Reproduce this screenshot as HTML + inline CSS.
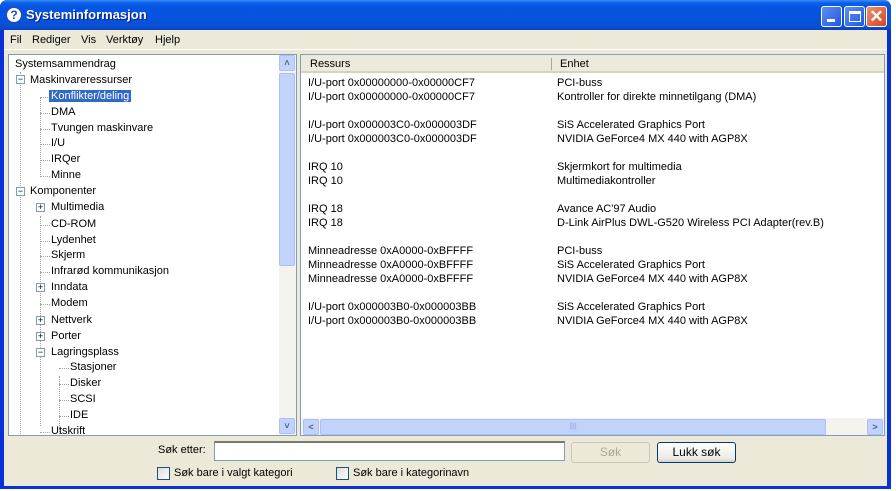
<!DOCTYPE html>
<html><head><meta charset="utf-8"><style>
*{margin:0;padding:0;box-sizing:border-box}
body{width:896px;height:491px;background:#fff;position:relative;overflow:hidden;font-family:"Liberation Sans",sans-serif;font-size:11px;color:#000}
.win{position:absolute;left:0;top:0;width:891px;height:489px;background:#0831d9;border-radius:7px 7px 0 0;}
.title{position:absolute;left:0;top:0;width:891px;height:30px;border-radius:7px 7px 0 0;background:linear-gradient(#3d8af7 0,#0a5fe8 3px,#0554e3 8px,#0653de 20px,#0a4fd0 27px,#0841c4 30px)}
.title .t{position:absolute;left:26px;top:7px;color:#fff;font-weight:bold;font-size:13px;text-shadow:1px 1px #0a2080}
.ico{position:absolute;left:6px;top:7px;width:16px;height:16px;border-radius:50%;background:#fff;border:1px solid #2a4c9c;color:#2050b0;font-weight:bold;font-size:12px;text-align:center;line-height:14px}
.btn{position:absolute;top:6px;width:21px;height:21px;border:1px solid #fff;border-radius:3px;background:linear-gradient(135deg,#5e8ff5,#2257e0)}
.client{position:absolute;left:4px;top:30px;width:883px;height:456px;background:#ece9d8}
.menu span{position:absolute;top:4px}
.panel{position:absolute;background:#fff;border:1px solid #7f9db9}
.tree div{position:absolute;white-space:nowrap}
.pm{position:absolute;width:9px;height:9px;border:1px solid #7f9db9;background:#fff;font-size:9px;line-height:7px;text-align:center;color:#000}
.vd{position:absolute;border-left:1px dotted #a0a0a0}
.hd{position:absolute;border-top:1px dotted #a0a0a0;width:10px}
.sbv{position:absolute;background:#f4f3ee}
.thumb{position:absolute;background:#c1d3fb;border:1px solid #a9c1f5;border-radius:2px}
.arr{position:absolute;width:16px;height:16px;background:#c1d3fb;border:1px solid #a9c1f5;border-radius:2px;color:#4d6185;font-size:9px;text-align:center;line-height:14px;font-weight:bold}
.row{position:absolute;white-space:nowrap}
.b{position:absolute;border-radius:3px;text-align:center;font-size:12px;line-height:19px}
.cb{position:absolute;width:13px;height:13px;border:1px solid #1c5180;background:linear-gradient(135deg,#dcdcd7,#fff)}
</style></head><body>
<div class="win">
<div class="title"><div class="ico">?</div><div class="t">Systeminformasjon</div>
<div class="btn" style="left:821px"><div style="position:absolute;left:5px;top:12px;width:8px;height:3px;background:#fff"></div></div>
<div class="btn" style="left:844px"><div style="position:absolute;left:4px;top:4px;width:12px;height:11px;border:1px solid #fff;border-top-width:3px"></div></div>
<div class="btn" style="left:866px;background:linear-gradient(135deg,#e99274,#d1461f);color:#fff;font-size:17px;line-height:19px;text-align:center;font-weight:bold">✕</div>
</div>
<div class="client">
<div class="menu"><span style="left:6px">Fil</span><span style="left:28px">Rediger</span><span style="left:77px">Vis</span><span style="left:102px">Verktøy</span><span style="left:151px">Hjelp</span></div>
<div style="position:absolute;left:0;top:19px;width:883px;height:1px;background:#fff"></div>
<div class="panel tree" style="left:4px;top:24px;width:289px;height:382px;overflow:hidden">
<div class="vd" style="left:11px;top:17px;height:370px"></div>
<div class="vd" style="left:31px;top:161px;height:210px"></div>
<div class="vd" style="left:50px;top:321px;height:62px"></div>
<div style="left:6px;top:3px">Systemsammendrag</div>
<div class="pm" style="left:7px;top:20px">−</div><div style="left:21px;top:19px">Maskinvareressurser</div>
<div class="hd" style="left:31px;top:42px"></div><div style="left:40px;top:35px;background:#316ac5;color:#fff;padding:0 2px">Konflikter/deling</div>
<div class="hd" style="left:31px;top:58px"></div><div style="left:42px;top:51px">DMA</div>
<div class="hd" style="left:31px;top:74px"></div><div style="left:42px;top:67px">Tvungen maskinvare</div>
<div class="hd" style="left:31px;top:89px"></div><div style="left:42px;top:82px">I/U</div>
<div class="hd" style="left:31px;top:105px"></div><div style="left:42px;top:98px">IRQer</div>
<div class="hd" style="left:31px;top:121px"></div><div style="left:42px;top:114px">Minne</div>
<div class="vd" style="left:31px;top:42px;height:80px"></div>
<div class="pm" style="left:7px;top:132px">−</div><div style="left:21px;top:130px">Komponenter</div>
<div class="pm" style="left:27px;top:148px">+</div><div style="left:42px;top:146px">Multimedia</div>
<div class="hd" style="left:31px;top:170px"></div><div style="left:42px;top:163px">CD-ROM</div>
<div class="hd" style="left:31px;top:186px"></div><div style="left:42px;top:179px">Lydenhet</div>
<div class="hd" style="left:31px;top:201px"></div><div style="left:42px;top:194px">Skjerm</div>
<div class="hd" style="left:31px;top:217px"></div><div style="left:42px;top:210px">Infrarød kommunikasjon</div>
<div class="pm" style="left:27px;top:228px">+</div><div style="left:42px;top:226px">Inndata</div>
<div class="hd" style="left:31px;top:249px"></div><div style="left:42px;top:242px">Modem</div>
<div class="pm" style="left:27px;top:261px">+</div><div style="left:42px;top:259px">Nettverk</div>
<div class="pm" style="left:27px;top:277px">+</div><div style="left:42px;top:275px">Porter</div>
<div class="pm" style="left:27px;top:293px">−</div><div style="left:42px;top:291px">Lagringsplass</div>
<div class="hd" style="left:50px;top:313px"></div><div style="left:61px;top:306px">Stasjoner</div>
<div class="hd" style="left:50px;top:329px"></div><div style="left:61px;top:322px">Disker</div>
<div class="hd" style="left:50px;top:345px"></div><div style="left:61px;top:338px">SCSI</div>
<div class="hd" style="left:50px;top:361px"></div><div style="left:61px;top:354px">IDE</div>
<div class="hd" style="left:31px;top:377px"></div><div style="left:42px;top:370px">Utskrift</div>
<div class="sbv" style="left:270px;top:0;width:17px;height:380px"></div>
<div class="arr" style="left:270px;top:0">˄</div>
<div class="thumb" style="left:270px;top:18px;width:16px;height:193px"></div>
<div class="arr" style="left:270px;top:363px">˅</div>
</div>
<div class="panel" style="left:296px;top:24px;width:585px;height:382px;overflow:hidden">
<div style="position:absolute;left:0;top:0;width:585px;height:18px;background:#ebeadb;border-bottom:2px solid #d6d2c2"></div>
<div class="row" style="left:9px;top:3px">Ressurs</div>
<div style="position:absolute;left:250px;top:3px;width:1px;height:12px;background:#aca899"></div>
<div class="row" style="left:259px;top:3px">Enhet</div>
<div style="position:absolute;left:7px;top:21px;line-height:14px;white-space:pre">I/U-port 0x00000000-0x00000CF7
I/U-port 0x00000000-0x00000CF7

I/U-port 0x000003C0-0x000003DF
I/U-port 0x000003C0-0x000003DF

IRQ 10
IRQ 10

IRQ 18
IRQ 18

Minneadresse 0xA0000-0xBFFFF
Minneadresse 0xA0000-0xBFFFF
Minneadresse 0xA0000-0xBFFFF

I/U-port 0x000003B0-0x000003BB
I/U-port 0x000003B0-0x000003BB</div>
<div style="position:absolute;left:256px;top:21px;line-height:14px;white-space:pre">PCI-buss
Kontroller for direkte minnetilgang (DMA)

SiS Accelerated Graphics Port
NVIDIA GeForce4 MX 440 with AGP8X

Skjermkort for multimedia
Multimediakontroller

Avance AC'97 Audio
D-Link AirPlus DWL-G520 Wireless PCI Adapter(rev.B)

PCI-buss
SiS Accelerated Graphics Port
NVIDIA GeForce4 MX 440 with AGP8X

SiS Accelerated Graphics Port
NVIDIA GeForce4 MX 440 with AGP8X</div>
<div class="sbv" style="left:0;top:363px;width:585px;height:18px"></div>
<div class="arr" style="left:2px;top:364px">&lt;</div>
<div class="thumb" style="left:19px;top:364px;width:506px;height:16px;text-align:center;font-size:7px;color:#8ea6dc;line-height:14px">||||</div>
<div class="arr" style="left:566px;top:364px">&gt;</div>
</div>
<div style="position:absolute;left:154px;top:414px">Søk etter:</div>
<div style="position:absolute;left:210px;top:411px;width:351px;height:20px;background:#fff;border:1px solid #7f9db9;border-top:2px solid #7a776a"></div>
<div class="b" style="left:567px;top:412px;width:79px;height:21px;border:1px solid #c9c7ba;color:#aca899">Søk</div>
<div class="b" style="left:653px;top:412px;width:79px;height:21px;border:1px solid #003c74;background:linear-gradient(#fff,#ecebe6 80%,#d6d0c5)">Lukk søk</div>
<div class="cb" style="left:153px;top:437px"></div><div style="position:absolute;left:170px;top:437px">Søk bare i valgt kategori</div>
<div class="cb" style="left:332px;top:437px"></div><div style="position:absolute;left:349px;top:437px">Søk bare i kategorinavn</div>
</div>
</div>
</body></html>
